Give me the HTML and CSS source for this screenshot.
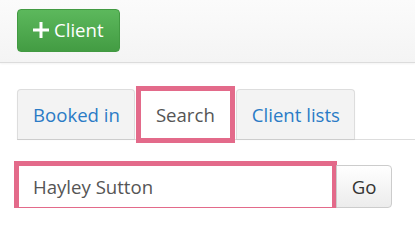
FILE: index.html
```html
<!DOCTYPE html>
<html>
<head>
<meta charset="utf-8">
<link rel="stylesheet" href="styles.css">
</head>
<body>
<header class="topbar">
  <button class="btn-add"><svg class="plus" width="16" height="16" viewBox="0 0 16 16"><rect x="6.5" y="0" width="3" height="16" fill="#fff"/><rect x="0" y="6.5" width="16" height="3" fill="#fff"/></svg><span>Client</span></button>
</header>
<main class="content">
  <nav class="tabs">
    <a class="tab">Booked in</a>
    <a class="tab active">Search</a>
    <a class="tab">Client lists</a>
  </nav>
  <form class="search-row">
    <input class="search-input" type="text" value="Hayley Sutton">
    <button class="btn-go" type="button">Go</button>
  </form>
</main>
</body>
</html>
```
FILE: styles.css
```css
* { box-sizing: border-box; }
html, body { margin: 0; padding: 0; background: #fff; }
body { font-family: "Open Sans", "Noto Sans", sans-serif; font-size: 18.6px; }

.topbar {
  height: 63px;
  background: linear-gradient(#fbfbfb, #f4f4f4);
  border-bottom: 1px solid #dcdcdc;
  box-shadow: 0 1px 2px rgba(0,0,0,0.05);
  padding: 9px 0 0 17px;
}
.btn-add {
  display: flex;
  align-items: center;
  height: 43px;
  width: 103px;
  padding: 0 0 0 15px;
  border: 1px solid #429a42;
  border-radius: 4px;
  background: linear-gradient(#5cb85c, #439c43);
  color: #fff;
  font-family: inherit;
  font-size: 18.6px;
  line-height: 1;
}
.plus { margin-right: 5px; margin-top: -1px; }

.content { padding: 26px 0 0 17px; }
.tabs {
  display: flex;
  align-items: flex-end;
  border-bottom: 1px solid #dddddd;
  height: 51px;
}
.tab {
  display: flex;
  align-items: center;
  height: 50px;
  padding: 0 14px 0 15px;
  background: #f3f3f3;
  border: 1px solid #dddddd;
  border-bottom: none;
  border-radius: 4px 4px 0 0;
  box-shadow: 0 1px 1px rgba(0,0,0,0.08);
  color: #2a7bc6;
  line-height: 25px;
}
.tab + .tab { margin-left: 6px; }
.tab.active {
  height: 47px;
  margin-bottom: 1px;
  padding: 0 15px 0 15px;
  background: #fff;
  border: none;
  border-radius: 0;
  box-shadow: none;
  color: #555;
  outline: 5px solid #e36a8a;
}

.search-row {
  display: flex;
  align-items: center;
  margin: 25px 0 0 2px;
}
.search-input {
  width: 313px;
  height: 41px;
  border: none;
  outline: 5px solid #e36a8a;
  padding: 0 0 0 14px;
  font-family: inherit;
  font-size: 18.6px;
  color: #555;
  background: #fff;
}
.btn-go {
  margin-left: 4px;
  width: 56px;
  height: 43px;
  border: 1px solid #cccccc;
  border-radius: 0 4px 4px 0;
  background: linear-gradient(#ffffff, #ececec);
  font-family: inherit;
  font-size: 18.6px;
  color: #333;
  padding: 0;
}
```
